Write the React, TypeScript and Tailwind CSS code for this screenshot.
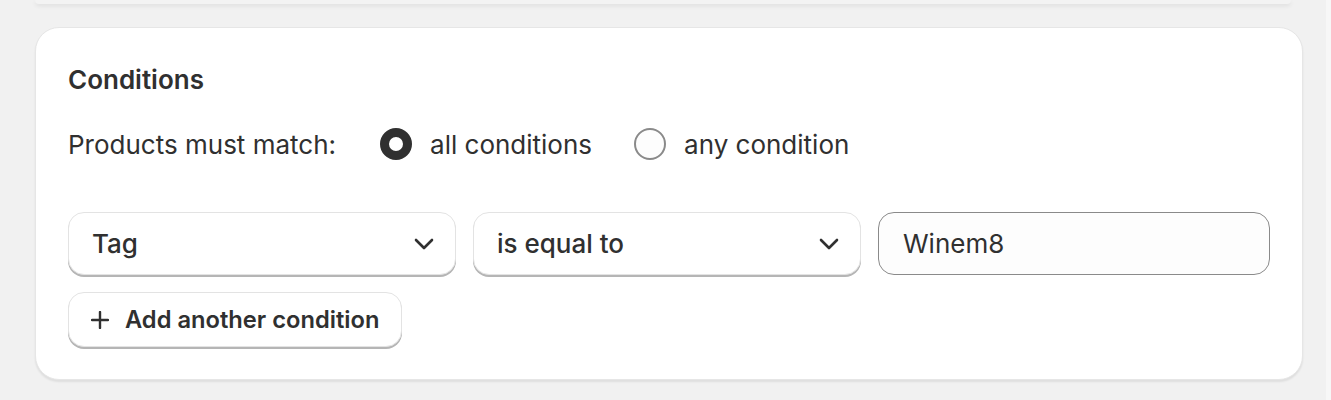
import { useState } from "react";

const Chevron = () => (
  <svg width="20" height="20" viewBox="0 0 20 20" fill="none">
    <path d="M2 6 10 14 18 6" stroke="#303030" strokeWidth="2.6" strokeLinecap="round" strokeLinejoin="round" />
  </svg>
);

const Select = ({ label }: { label: string }) => (
  <div className="flex-1 h-[63px] flex items-center justify-between pl-[23px] pr-[21px] bg-white rounded-[16px] border border-[#e3e3e3] shadow-[0_2px_0_0_#b5b5b5]">
    <span className="text-[26px] font-medium text-[#303030]">{label}</span>
    <Chevron />
  </div>
);

const Radio = ({ checked, label, onClick }: { checked: boolean; label: string; onClick: () => void }) => (
  <button onClick={onClick} className="flex items-center gap-[18px] cursor-pointer">
    {checked ? (
      <span className="w-[32px] h-[32px] rounded-full border-[9px] border-[#303030] bg-white"></span>
    ) : (
      <span className="w-[32px] h-[32px] rounded-full border-2 border-[#8a8a8a] bg-[#fdfdfd]"></span>
    )}
    <span className="text-[26px] text-[#303030]">{label}</span>
  </button>
);

export default function App() {
  const [match, setMatch] = useState("all");

  return (
    <div className="flex w-[1331px] h-[400px] bg-[#f1f1f1] font-['Inter',sans-serif]">
      <div className="flex-1 flex flex-col">
        <div className="h-[4px] mx-[35px] bg-[#f3f3f3] rounded-b-[24px] shadow-[0_2px_4px_rgba(0,0,0,0.08)]"></div>
        <section className="mt-[23px] ml-[35px] w-[1268px] bg-white rounded-[24px] border border-[#e6e6e6] shadow-[0_2px_2px_rgba(0,0,0,0.08)] px-[32px] pt-[32px] pb-[32px]">
          <h2 className="text-[26px] font-semibold text-[#303030] leading-[40px]">Conditions</h2>
          <div className="flex items-center mt-[24px] h-[40px]">
            <span className="text-[26px] text-[#303030] mr-[44px]">Products must match:</span>
            <div className="flex items-center gap-[42px]">
              <Radio checked={match === "all"} label="all conditions" onClick={() => setMatch("all")} />
              <Radio checked={match === "any"} label="any condition" onClick={() => setMatch("any")} />
            </div>
          </div>
          <div className="flex gap-[17px] mt-[48px]">
            <Select label="Tag" />
            <Select label="is equal to" />
            <div className="flex-1 h-[63px] flex items-center px-6 bg-[#fdfdfd] rounded-[16px] border border-[#8a8a8a]">
              <span className="text-[26px] text-[#303030]">Winem8</span>
            </div>
          </div>
          <button className="mt-[17px] h-[55px] flex items-center gap-[16px] pl-[22px] pr-[22px] bg-white rounded-[16px] border border-[#e3e3e3] shadow-[0_2px_0_0_#b5b5b5]">
            <svg width="18" height="18" viewBox="0 0 18 18" fill="none">
              <path d="M9 1v16M1 9h16" stroke="#303030" strokeWidth="2.4" strokeLinecap="round" />
            </svg>
            <span className="text-[23.7px] font-semibold text-[#303030]">Add another condition</span>
          </button>
        </section>
      </div>
      <div className="w-[5px] bg-[#f7f7f7]"></div>
    </div>
  );
}
